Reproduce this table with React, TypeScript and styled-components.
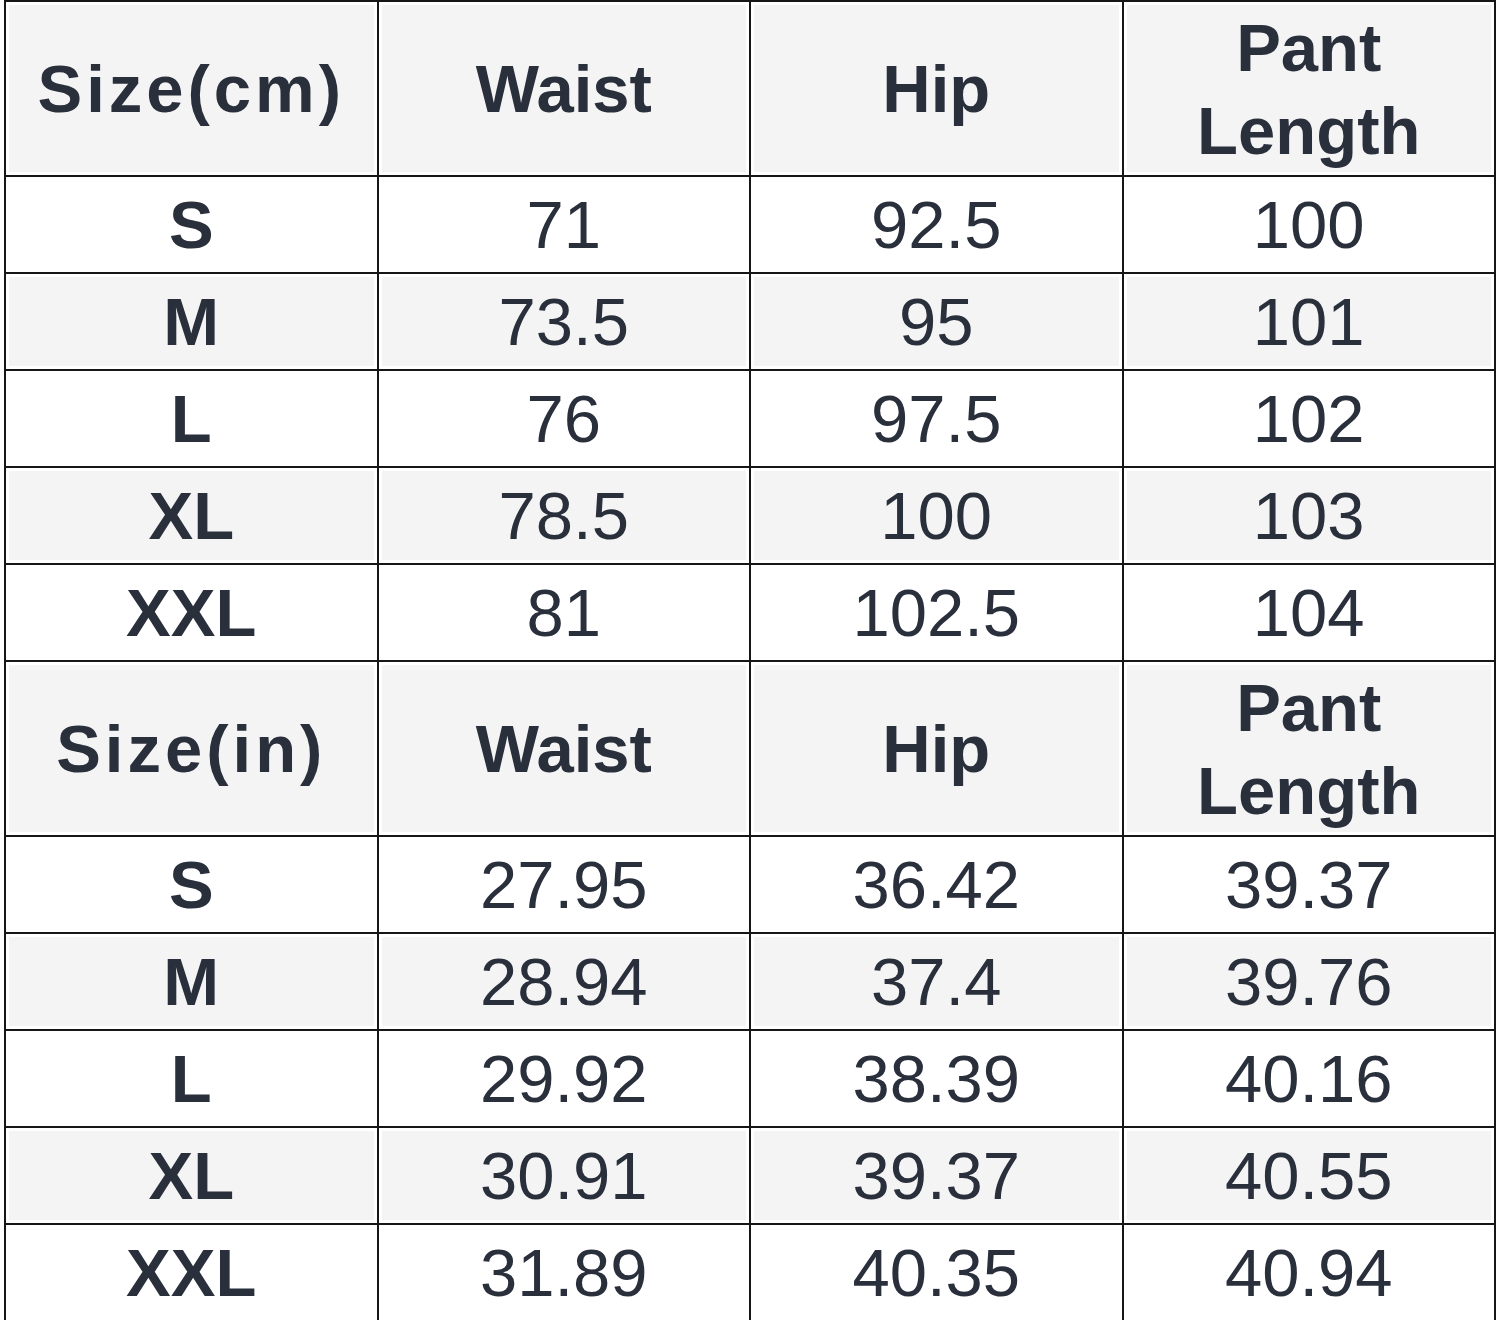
import styled, { createGlobalStyle } from "styled-components";

const GlobalStyle = createGlobalStyle`
  html, body {
    margin: 0;
    padding: 0;
    background: #fff;
  }
`;

const Page = styled.div`
  padding: 0 0 0 4px;
  overflow: hidden;
  height: 1320px;
`;

const Table = styled.table`
  width: 1492px;
  table-layout: fixed;
  border-collapse: collapse;
  font-family: "Liberation Sans", Arial, sans-serif;
  color: #2a2f3c;
`;

const Row = styled.tr<{ $shade?: boolean; $head?: boolean }>`
  height: ${(p) => (p.$head ? "175px" : "97px")};
  background: ${(p) => (p.$shade ? "#f4f4f4" : "#fff")};
`;

const Cell = styled.td<{ $bold?: boolean; $shade?: boolean; $wide?: boolean }>`
  border: 2px solid #161616;
  padding: 0;
  text-align: center;
  vertical-align: middle;
  font-size: 67px;
  line-height: 83px;
  font-weight: ${(p) => (p.$bold ? 700 : 400)};
  letter-spacing: ${(p) => (p.$wide ? "4px" : "0")};
  box-shadow: ${(p) => (p.$shade ? "inset 0 0 0 3px #fff" : "none")};
`;

const cm = [
  ["S", "71", "92.5", "100"],
  ["M", "73.5", "95", "101"],
  ["L", "76", "97.5", "102"],
  ["XL", "78.5", "100", "103"],
  ["XXL", "81", "102.5", "104"],
];

const inch = [
  ["S", "27.95", "36.42", "39.37"],
  ["M", "28.94", "37.4", "39.76"],
  ["L", "29.92", "38.39", "40.16"],
  ["XL", "30.91", "39.37", "40.55"],
  ["XXL", "31.89", "40.35", "40.94"],
];

function Header({ unit }: { unit: string }) {
  return (
    <Row $head $shade>
      <Cell $bold $shade $wide>Size({unit})</Cell>
      <Cell $bold $shade>Waist</Cell>
      <Cell $bold $shade>Hip</Cell>
      <Cell $bold $shade>
        Pant
        <br />
        Length
      </Cell>
    </Row>
  );
}

function Rows({ data }: { data: string[][] }) {
  return (
    <>
      {data.map((r, i) => {
        const shade = i % 2 === 1;
        return (
          <Row key={r[0]} $shade={shade}>
            <Cell $bold $shade={shade}>{r[0]}</Cell>
            <Cell $shade={shade}>{r[1]}</Cell>
            <Cell $shade={shade}>{r[2]}</Cell>
            <Cell $shade={shade}>{r[3]}</Cell>
          </Row>
        );
      })}
    </>
  );
}

export default function App() {
  return (
    <>
      <GlobalStyle />
      <Page>
        <Table>
          <tbody>
            <Header unit="cm" />
            <Rows data={cm} />
            <Header unit="in" />
            <Rows data={inch} />
          </tbody>
        </Table>
      </Page>
    </>
  );
}
